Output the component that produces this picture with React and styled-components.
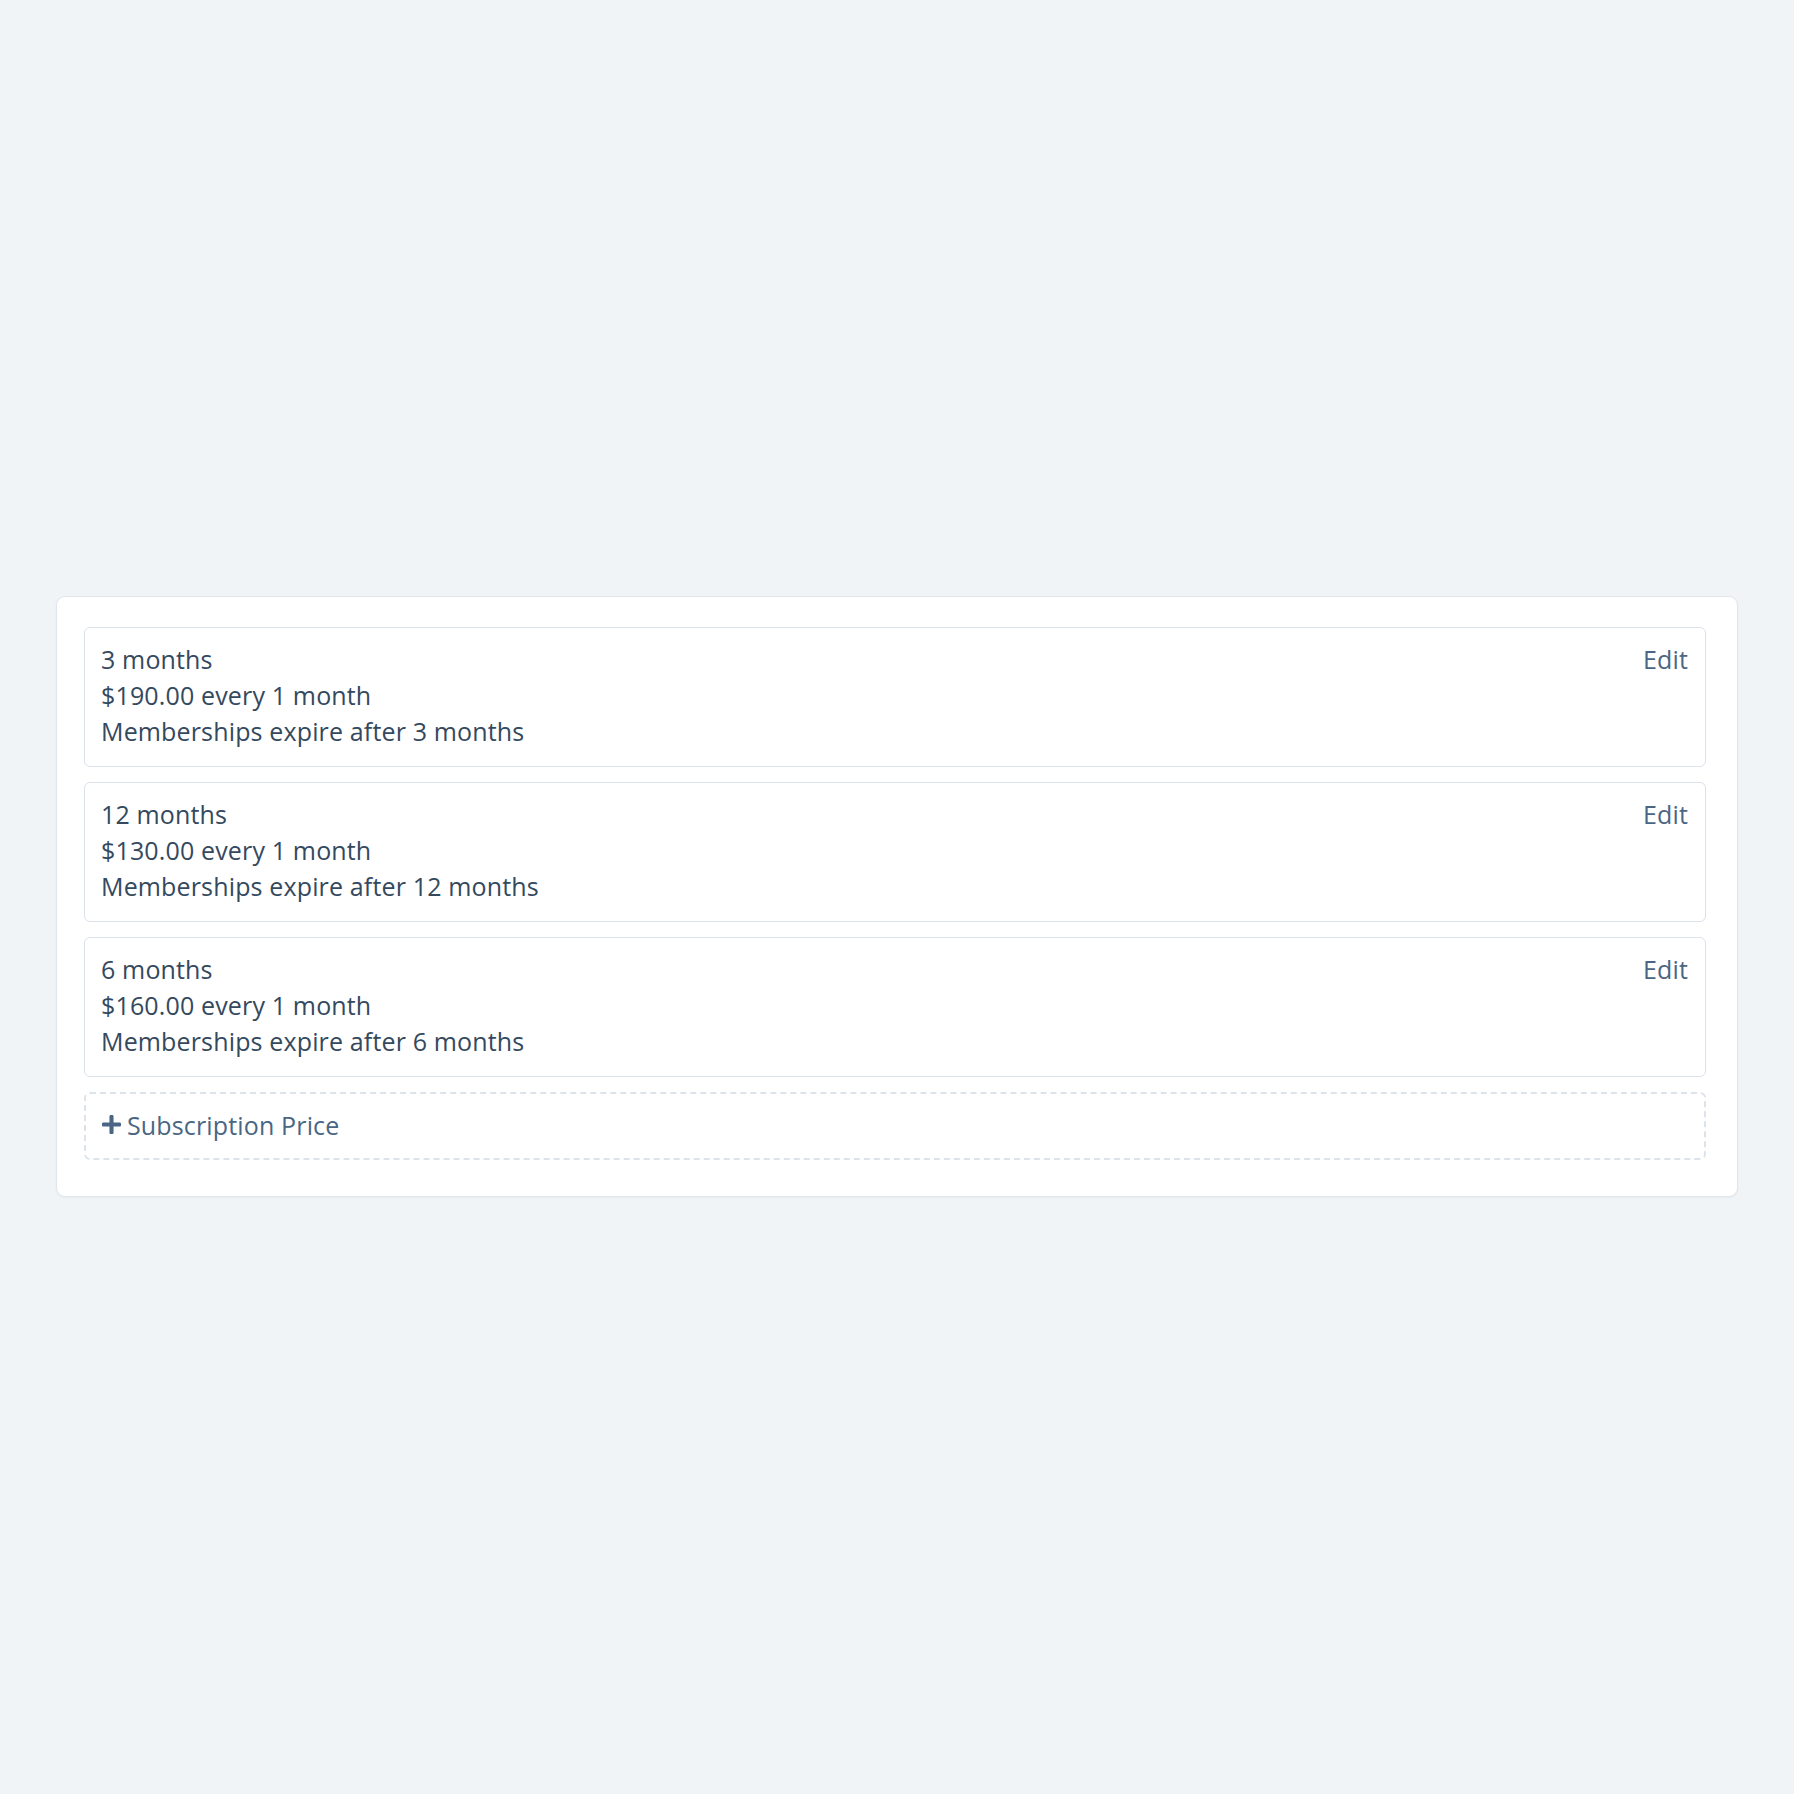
import styled, { createGlobalStyle } from 'styled-components';

const prices = [
    { id: 1, name: '3 months', amount: '$190.00', every: '1 month', expires: '3 months' },
    { id: 2, name: '12 months', amount: '$130.00', every: '1 month', expires: '12 months' },
    { id: 3, name: '6 months', amount: '$160.00', every: '1 month', expires: '6 months' },
];

const PlusIcon = () => (
    <svg width="19" height="19" viewBox="0 0 448 448" aria-hidden="true">
        <path
            fill="currentColor"
            d="M416 176H272V32c0-17.7-14.3-32-32-32h-32c-17.7 0-32 14.3-32 32v144H32c-17.7 0-32 14.3-32 32v32c0 17.7 14.3 32 32 32h144v144c0 17.7 14.3 32 32 32h32c17.7 0 32-14.3 32-32V272h144c17.7 0 32-14.3 32-32v-32c0-17.7-14.3-32-32-32z"
        />
    </svg>
);

const App = () => {
    return (
        <>
        <GlobalStyle />
        <Page>
            <Card>
                <List>
                {prices.map(price => (
                    <PriceItem key={price.id}>
                        <Details>
                            <Line>{price.name}</Line>
                            <Line>{price.amount} every {price.every}</Line>
                            <Line>Memberships expire after {price.expires}</Line>
                        </Details>
                        <EditLink href="#">Edit</EditLink>
                    </PriceItem>
                ))}
                </List>
                <AddButton type="button">
                    <PlusIcon />
                    <span>Subscription Price</span>
                </AddButton>
            </Card>
        </Page>
        </>
    )
}

export default App;

const GlobalStyle = createGlobalStyle`
    html, body {
        margin: 0;
        padding: 0;
        background: #f0f4f7;
    }
    body {
        font-family: "Open Sans", "Noto Sans", sans-serif;
        color: #34495e;
    }
`;

const Page = styled.div`
    min-height: 1792px;
    display: flex;
    align-items: center;
    padding: 0 56px 0 56px;
    box-sizing: border-box;
`;

const Card = styled.div`
    flex: 1;
    background: #fff;
    border: 1px solid #e1e6eb;
    border-radius: 9px;
    box-shadow: 0 1px 2px rgba(40, 60, 80, 0.05);
    padding: 30px 31px 36px 27px;
    display: flex;
    flex-direction: column;
    gap: 15px;
`;

const List = styled.ul`
    list-style-type: none;
    margin: 0;
    padding: 0;
    display: flex;
    flex-direction: column;
    gap: 15px;
`;

const PriceItem = styled.li`
    display: flex;
    justify-content: space-between;
    align-items: flex-start;
    border: 1px solid #dbe2ea;
    border-radius: 6px;
    padding: 13px 17px 17px 16px;
`;

const Details = styled.div`
    display: flex;
    flex-direction: column;
`;

const Line = styled.span`
    font-size: 25px;
    line-height: 36px;
    letter-spacing: 0.15px;
    color: #34495e;
`;

const EditLink = styled.a`
    font-size: 25px;
    line-height: 36px;
    letter-spacing: 0.15px;
    color: #4a6684;
    text-decoration: none;
`;

const AddButton = styled.button`
    display: flex;
    align-items: center;
    gap: 6px;
    background: transparent;
    border: 2px dashed #dde3ea;
    border-radius: 6px;
    padding: 13px 16px 15px 16px;
    font-family: "Open Sans", "Noto Sans", sans-serif;
    font-size: 25px;
    line-height: 36px;
    letter-spacing: 0.15px;
    color: #4a6684;
    text-align: left;
    cursor: pointer;
`;
